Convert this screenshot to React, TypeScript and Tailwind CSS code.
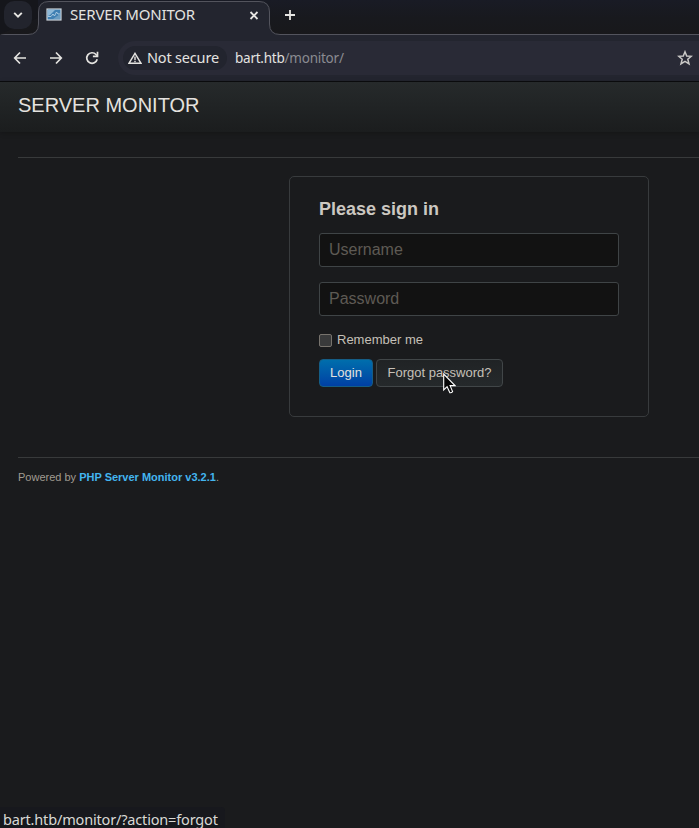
import React from "react";

const ui = "font-['Noto_Sans',sans-serif]";

function TabStrip() {
  return (
    <div className="relative flex h-[35px] bg-linear-to-b from-[#191b25] via-[#18191e] to-[#18181b]">
      <svg className="absolute inset-0" width="699" height="35" fill="none">
        <path d="M0 0H38V18L0 34Z" fill="#15161b" />
        <path
          d="M-1 38Q1 34.500 5 34.500H28Q38.500 34.500 38.500 24V12Q38.500 1.500 49 1.500H259Q269.500 1.500 269.500 12V24Q269.500 34.500 280 34.500H700V38Z"
          fill="#23252f"
        />
        <path
          d="M-1 36Q1 34.500 5 34.500H28Q38.500 34.500 38.500 24V12Q38.500 1.500 49 1.500H259Q269.500 1.500 269.500 12V24Q269.500 34.500 280 34.500H700"
          stroke="#53545d"
        />
      </svg>
      <button className="relative ml-1 mt-px flex h-7 w-7 items-center justify-center rounded-[10px] bg-[#22242d]">
        <svg width="10" height="8" fill="none" stroke="#e6e5e2" strokeWidth="1.9">
          <path d="M1.200 1.800L5 5.600L8.800 1.800" />
        </svg>
      </button>
      <div className="relative flex h-[30px] w-[238px] items-center pl-[14px]">
        <svg width="16" height="13" className="mt-[-1px] shrink-0">
          <rect x="1" y="1" width="14" height="11" fill="#3f7fb3" stroke="#ccd4da" strokeWidth="1.200" />
          <path d="M2 2H9L4 7L2 8Z" fill="#8db8d8" />
          <path d="M2 8.500H5L7 6L8.500 8L10.500 4L12 6H14" stroke="#b5d0e4" fill="none" strokeWidth="0.900" />
          <path d="M7 11L14 6V11Z" fill="#6c9dc2" />
        </svg>
        <span className="mt-[-2px] ml-[8px] w-[179px] text-[15px] leading-5 tracking-[-0.170px] text-[#e4e3e0]">SERVER MONITOR</span>
        <svg width="10" height="9" className="shrink-0" stroke="#e6e5e2" strokeWidth="1.8">
          <path d="M1.500 1L8.500 8M8.500 1L1.500 8" />
        </svg>
      </div>
      <svg className="relative ml-[14px] mt-[9px]" width="12" height="12" stroke="#e6e5e2" strokeWidth="1.800">
        <path d="M1 6H11M6 1V11" />
      </svg>
    </div>
  );
}

function Toolbar() {
  return (
    <div className="flex h-[47px] items-start border-b border-[#0b0c0e] bg-[#23252f] pt-[6px]">
      <div className="flex h-[34px] w-[118px] shrink-0 items-center pl-[13px]">
        <svg width="14" height="14" fill="none" stroke="#e4e3e0" strokeWidth="1.700">
          <path d="M13 7H2M7 1.500L1.700 7L7 12.500" />
        </svg>
        <svg className="ml-[22px]" width="14" height="14" fill="none" stroke="#e4e3e0" strokeWidth="1.700">
          <path d="M1 7H12M7 1.500L12.300 7L7 12.500" />
        </svg>
        <svg className="ml-[22px]" width="14" height="14" fill="none" stroke="#e4e3e0" strokeWidth="1.700">
          <path d="M12.200 8.300A5.300 5.300 0 1 1 11 3.500L12.500 5" />
          <path d="M12.500 0.800V5.400H7.900" />
        </svg>
      </div>
      <div className="flex h-[34px] flex-1 items-center rounded-l-[17px] bg-[#292a36] pl-[5px]">
        <div className="flex h-6 w-[104px] items-center rounded-full bg-[#22242e] pl-[5px]">
          <svg width="14" height="12" fill="none" stroke="#e4e3e0" strokeWidth="1.400">
            <path d="M7 1.300L13 11.300H1Z" />
            <path d="M7 4.500V8M7 8.800V10.200" />
          </svg>
          <span className="mt-[-2px] ml-[5px] whitespace-nowrap text-[14.500px] leading-5 tracking-[-0.180px] text-[#e4e3e0]">Not secure</span>
        </div>
        <span className="ml-2 text-[13.500px] leading-5 tracking-[-0.240px] text-[#8a8b91]">
          <span className="text-[#e4e3e0]">bart.htb</span>/monitor/
        </span>
        <svg className="ml-auto mr-[6px]" width="16" height="16" fill="none" stroke="#c9c8c6" strokeWidth="1.500">
          <path d="M8 1.800L9.700 6L14.300 6.300L10.800 9.200L12 13.800L8 11.300L4 13.800L5.200 9.200L1.700 6.300L6.300 6Z" />
        </svg>
      </div>
    </div>
  );
}

function LoginForm() {
  const input =
    "block h-[34px] w-[300px] rounded-[3px] border border-[#3f4446] bg-[#121212] px-[9px] text-[16px] text-[#c8c3bb] placeholder:text-[#5e5a54] placeholder:opacity-100 outline-none";
  return (
    <form
      className="ml-[289px] mt-[18px] h-[241px] w-[360px] rounded-[5px] border border-[#383b3d] bg-[#1a1b1d] pl-[29px] pt-[19px]"
      onSubmit={(e) => e.preventDefault()}
    >
      <h3 className="h-[37px] text-[18px] font-bold leading-[26px] text-[#ccc8c1]">Please sign in</h3>
      <input className={input} placeholder="Username" />
      <input className={input + " mt-[15px]"} placeholder="Password" />
      <label className="mt-[14px] flex h-5 items-center text-[13px] leading-5 text-[#c5c0b8]">
        <input type="checkbox" className="mt-[1px] h-[13px] w-[13px] appearance-none rounded-[2px] border border-[#77736d] bg-[#393a3b]" />
        <span className="ml-[5px]">Remember me</span>
      </label>
      <div className="mt-[9px] flex gap-[3px] text-[13px] leading-[20px]">
        <button className="h-7 w-[54px] rounded-[4px] border border-[#155d86] bg-linear-to-b from-[#006eac] to-[#003fa4] pb-px text-[#e4e2df]">
          Login
        </button>
        <button className="relative h-7 w-[127px] rounded-[4px] border border-[#414648] bg-linear-to-b from-[#202325] to-[#25292b] pb-px text-[#c5c0b8]">
          Forgot password?
          <svg className="absolute left-[66px] top-[13px]" width="13" height="21">
            <path
              d="M0.700 1V17L4.100 13.700L6.900 19.700Q8.200 20.200 9.600 18.600L7.100 12.600H12Z"
              fill="#050505"
              stroke="#fff"
              strokeWidth="1.100"
            />
          </svg>
        </button>
      </div>
    </form>
  );
}

export default function App() {
  return (
    <div className="flex h-[828px] w-[699px] flex-col bg-[#1a1b1d] font-['Liberation_Sans',Arial,sans-serif]">
      <div className={ui}>
        <TabStrip />
        <Toolbar />
      </div>
      <header className="h-[50px] bg-linear-to-b from-[#262a2b] to-[#1b1d1e] pl-[18px] text-[20px] leading-[46px] text-[#e4e2df] shadow-[0_1px_5px_rgba(0,0,0,0.25)]">
        SERVER MONITOR
      </header>
      <main className="flex-1">
        <div className="ml-[18px] mt-[25px] border-t border-[#383a3b]" />
        <LoginForm />
        <footer className="ml-[18px] mt-[40px] border-t border-[#383a3b] pt-[10px] text-[11px] leading-[18px] text-[#a19b91]">
          Powered by <a className="font-bold text-[#43b5ef]">PHP Server Monitor v3.2.1</a>.
        </footer>
      </main>
      <div className={"h-[21px] w-[225px] rounded-tr-[4px] bg-[#17181d] pl-[3px] pt-[3px] text-[14.500px] leading-[18px] tracking-[-0.170px] text-[#d9d8d5] " + ui}>
        bart.htb/monitor/?action=forgot
      </div>
    </div>
  );
}
